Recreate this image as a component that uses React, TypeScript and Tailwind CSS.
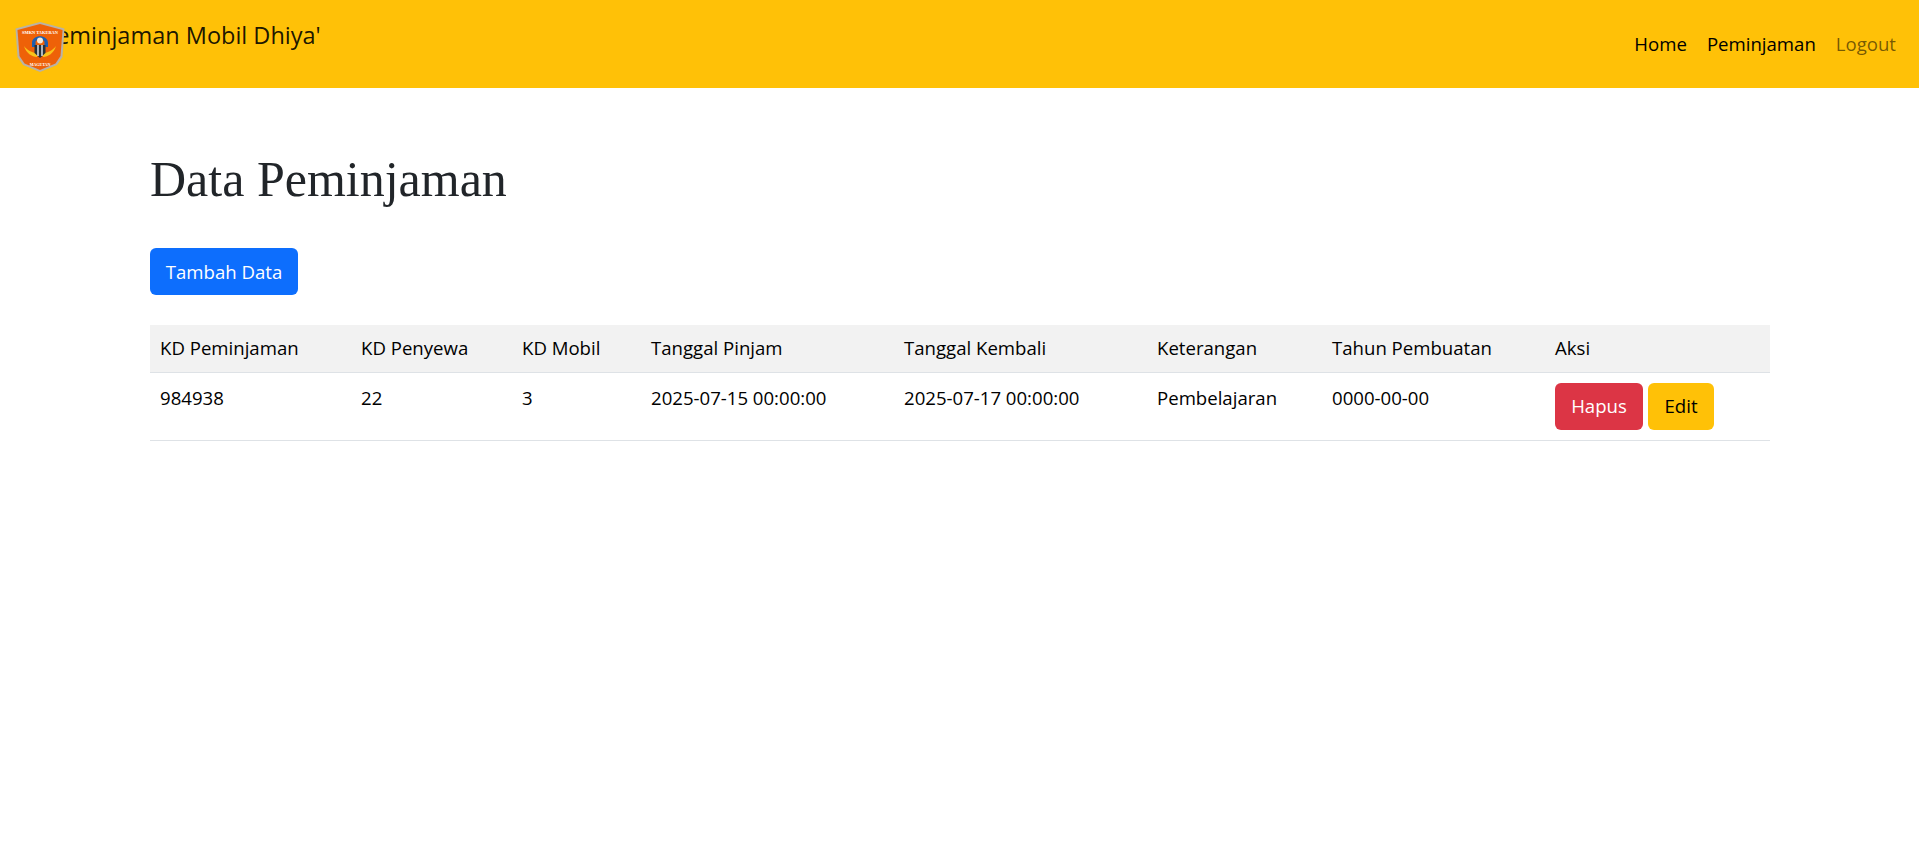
const headers = ["KD Peminjaman", "KD Penyewa", "KD Mobil", "Tanggal Pinjam", "Tanggal Kembali", "Keterangan", "Tahun Pembuatan", "Aksi"];
const cells = ["984938", "22", "3", "2025-07-15 00:00:00", "2025-07-17 00:00:00", "Pembelajaran", "0000-00-00"];
const widths = ["w-[201px]", "w-[161px]", "w-[129px]", "w-[253px]", "w-[253px]", "w-[175px]", "w-[223px]", "w-[225px]"];

function Logo() {
  return (
    <svg viewBox="0 0 50 50" className="absolute left-[15px] top-[22px] h-[50px] w-[50px]">
      <path d="M0.5 6.5 L25 0 L49.5 6.5 L47.5 35 L42 43 L25 50 L8 43 L2.5 35 Z" fill="#b9b2a6" />
      <path d="M2.5 8 L25 2 L47.5 8 L45.5 34 L40.5 41.5 L25 48 L9.5 41.5 L4.5 34 Z" fill="#ee6108" />
      <text x="25" y="12" textAnchor="middle" fontSize="4.4" fontWeight="700" fontFamily="Liberation Serif, serif" fill="#fff">SMKN TAKERAN</text>
      <path d="M9 24 C11 31 17 35 22 35 L22 31 C17 31 12 28 9 24 Z" fill="#f9c31a" />
      <path d="M41 24 C39 31 33 35 28 35 L28 31 C33 31 38 28 41 24 Z" fill="#f9c31a" />
      <path d="M17 21 C17 12 33 12 33 21 L33 25 L29.5 25 L29.5 20 C29.5 17 20.5 17 20.5 20 L20.5 25 L17 25 Z" fill="#1d5fb0" />
      <circle cx="25" cy="18.5" r="3" fill="#f3e9d8" />
      <path d="M19.5 23 L30.5 23 L30.5 31 L25 36 L19.5 31 Z" fill="#26303a" />
      <path d="M23 23 L23 34 M27 23 L27 34" stroke="#e8edf2" strokeWidth="1.4" />
      <text x="25" y="43.5" textAnchor="middle" fontSize="4" fontWeight="700" fontFamily="Liberation Serif, serif" fill="#fff">MAGETAN</text>
    </svg>
  );
}

export default function App() {
  return (
    <div className="min-h-[868px] bg-white font-['Open_Sans','Noto_Sans',sans-serif] text-[18.6px] leading-[30px] text-black">
      <nav className="relative flex h-[88px] items-start justify-between bg-[#ffc107] pl-[42px] pr-[23px]">
        <a className="mt-[19px] block whitespace-nowrap text-[23.5px] leading-[32px] text-black/90">Peminjaman Mobil Dhiya'</a>
        <Logo />
        <ul className="mt-[29px] flex gap-[20px]">
          <li>Home</li>
          <li>Peminjaman</li>
          <li className="text-black/55">Logout</li>
        </ul>
      </nav>
      <main className="mx-[150px] pt-[62px]">
        <h1 className="font-['Liberation_Serif',serif] text-[50px] leading-[58px] text-[#212529]">Data Peminjaman</h1>
        <button className="mt-[40px] block h-[47px] w-[148px] rounded-[6px] bg-[#0d6efd] text-white">Tambah Data</button>
        <table className="mt-[30px] w-[1620px] table-fixed border-collapse text-left">
          <thead>
            <tr className="h-[47px] border-b border-[#dee2e6] bg-[#f2f2f2]">
              {headers.map((h, i) => (
                <th key={h} className={`${widths[i]} px-[10px] font-normal`}>{h}</th>
              ))}
            </tr>
          </thead>
          <tbody>
            <tr className="h-[68px] border-b border-[#dee2e6]">
              {cells.map((c) => (
                <td key={c} className="px-[10px] pt-[10px] align-top">{c}</td>
              ))}
              <td className="px-[10px] py-[10px] align-top">
                <div className="flex gap-[5px]">
                  <button className="h-[47px] w-[88px] rounded-[6px] bg-[#dc3545] text-white">Hapus</button>
                  <button className="h-[47px] w-[66px] rounded-[6px] bg-[#ffc107] text-black">Edit</button>
                </div>
              </td>
            </tr>
          </tbody>
        </table>
      </main>
    </div>
  );
}
